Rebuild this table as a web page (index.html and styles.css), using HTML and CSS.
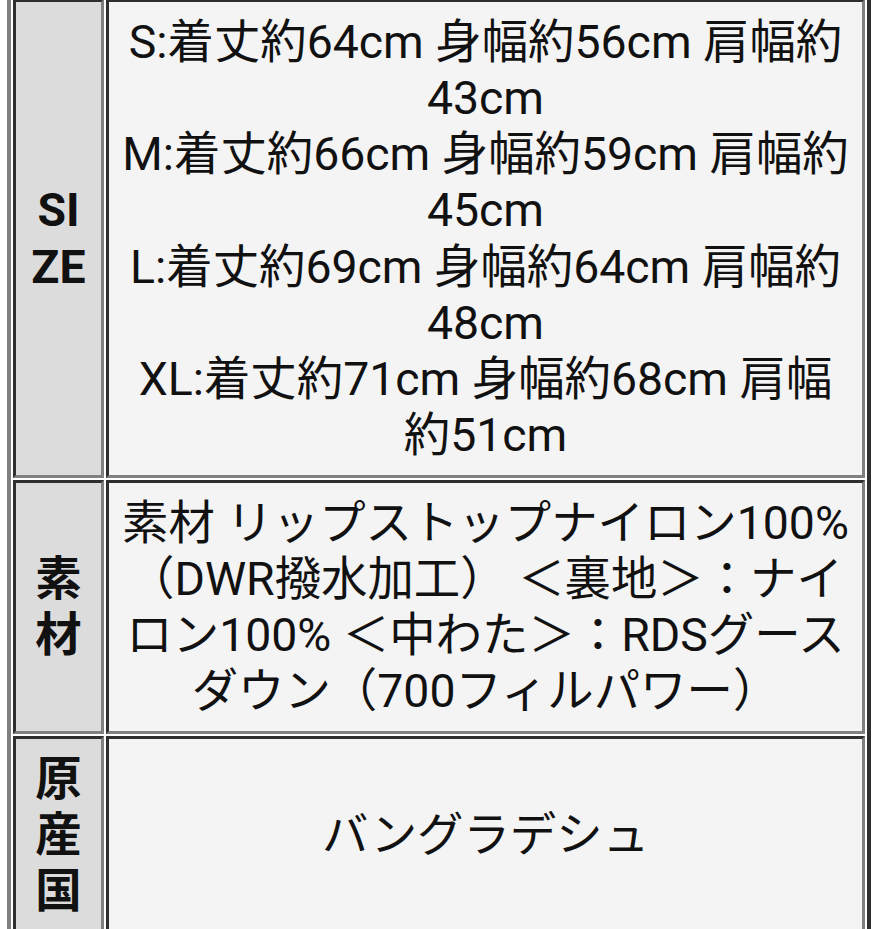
FILE: index.html
```html
<!DOCTYPE html>
<html lang="ja">
<head>
<meta charset="utf-8">
<link rel="stylesheet" href="styles.css">
</head>
<body>
<table class="spec">
  <tr>
    <th>SIZE</th>
    <td>S:着丈約64cm 身幅約56cm 肩幅約43cm<br>M:着丈約66cm 身幅約59cm 肩幅約45cm<br>L:着丈約69cm 身幅約64cm 肩幅約48cm<br>XL:着丈約71cm 身幅約68cm 肩幅約51cm</td>
  </tr>
  <tr>
    <th>素材</th>
    <td>素材 リップストップナイロン100%（DWR撥水加工） ＜裏地＞：ナイロン100% ＜中わた＞：RDSグースダウン（700フィルパワー）</td>
  </tr>
  <tr>
    <th>原産国</th>
    <td>バングラデシュ</td>
  </tr>
</table>
</body>
</html>
```

FILE: styles.css
```css
html, body {
  margin: 0;
  background: #ffffff;
}
body {
  font-family: Roboto, "Noto Sans CJK JP", sans-serif;
  color: #111111;
  overflow: hidden;
}
.spec {
  border-collapse: separate;
  border-spacing: 2px;
  table-layout: fixed;
  width: 864px;
  margin: -7px 0 0 7px;
  border: 4px solid;
  border-color: #808080 #2e2e2e #2e2e2e #808080;
}
.spec th,
.spec td {
  border: 3px solid;
  border-color: #2e2e2e #808080 #808080 #2e2e2e;
  font-size: 46.4px;
  line-height: 56.25px;
  text-align: center;
  vertical-align: middle;
}
.spec th {
  width: 65px;
  padding: 11.5px 10px;
  background: #dcdcdc;
  font-weight: bold;
  word-break: break-all;
}
.spec td {
  padding: 11.5px 12px;
  background: #f4f4f4;
  font-weight: normal;
}
```
